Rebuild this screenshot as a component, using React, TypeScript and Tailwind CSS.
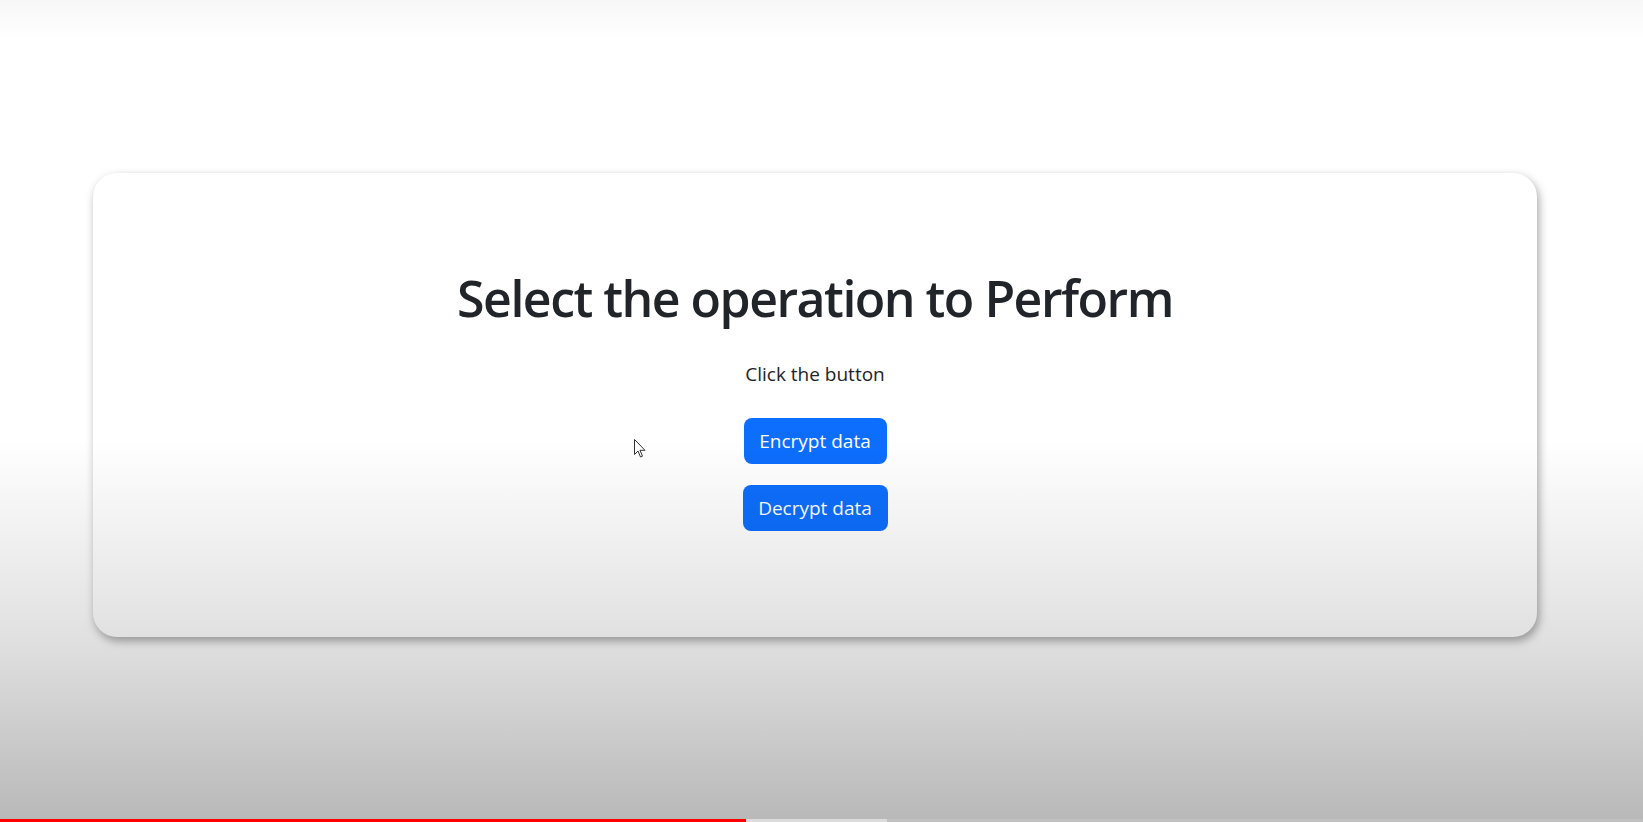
import { useState } from 'react';

type Mode = 'idle' | 'encrypt' | 'decrypt';

export default function App() {
    const [mode, setMode] = useState<Mode>('idle');

    return (
        <div className="relative h-[822px] w-full overflow-hidden bg-white font-['Open_Sans',sans-serif] text-[#212529]">
            {/* Card */}
            <div className="pt-[173px] pl-[93px]">
                <div className="flex h-[464px] w-[1444px] flex-col items-center rounded-[24px] bg-white pt-[95px] shadow-[2px_4px_10px_rgba(0,0,0,0.35)]">
                    <h1 className="text-[50px] leading-[60px] font-semibold tracking-[-0.03em]">
                        Select the operation to Perform
                    </h1>
                    <p className="mt-[34px] text-[19px] leading-6">Click the button</p>
                    <div className="mt-[32px] flex flex-col items-center gap-[21px]">
                        <button
                            onClick={() => setMode('encrypt')}
                            className="h-[46px] w-[143px] rounded-lg bg-[#0d6efd] text-[19px] text-white"
                            data-active={mode === 'encrypt'}
                        >
                            Encrypt data
                        </button>
                        <button
                            onClick={() => setMode('decrypt')}
                            className="h-[46px] w-[145px] rounded-lg bg-[#0d6efd] text-[19px] text-white"
                            data-active={mode === 'decrypt'}
                        >
                            Decrypt data
                        </button>
                    </div>
                </div>
            </div>

            {/* Player shading over the page */}
            <div className="pointer-events-none absolute inset-0 bg-[linear-gradient(to_bottom,rgba(0,0,0,0.03)_0px,rgba(0,0,0,0)_40px,rgba(0,0,0,0)_440px,rgba(0,0,0,0.12)_640px,rgba(0,0,0,0.28)_822px)]" />

            {/* Mouse cursor */}
            <svg className="pointer-events-none absolute left-[634px] top-[439px]" width="12" height="19" viewBox="0 0 12 19">
                <path d="M0.5 0.5 L0.5 15.5 L4 12 L6.5 18 L8.5 17.2 L6 11.3 L11 11.3 Z" fill="#fff" stroke="#333" strokeWidth="1" strokeLinejoin="round" />
            </svg>

            {/* Progress bar */}
            <div className="absolute bottom-0 left-0 flex h-[3px] w-full">
                <div className="w-[746px] bg-[#ff0000]" />
                <div className="w-[141px] bg-[#dcdcdc]" />
                <div className="flex-1 bg-white/10" />
            </div>
        </div>
    );
}
